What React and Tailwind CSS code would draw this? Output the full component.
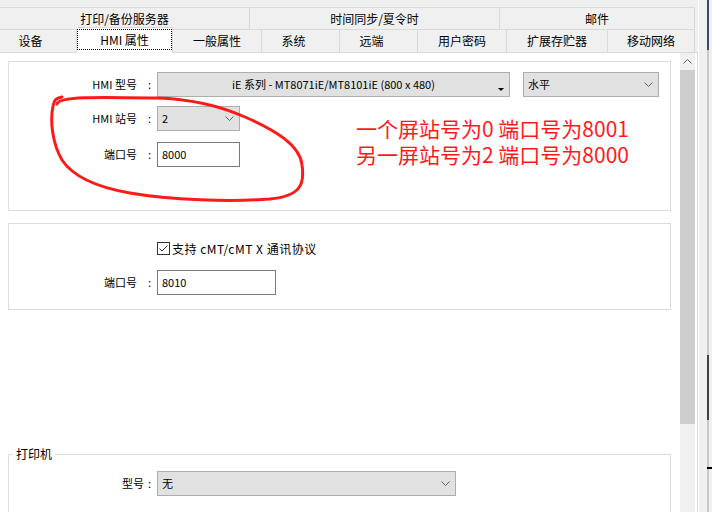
import React from 'react';

const Chevron = ({ up }) => (
  <svg width="9" height="5" viewBox="0 0 9 5">
    <path d={up ? 'M0.5 4.5 L4.5 0.5 L8.5 4.5' : 'M0.5 0.5 L4.5 4.5 L8.5 0.5'} stroke="#606060" fill="none" />
  </svg>
);

const Label = ({ text, colon = 'w-[16px]' }) => (
  <div className="w-[144px] shrink-0 flex justify-end items-center text-[11px]">
    <span>{text}</span>
    <span className={`${colon} text-right pr-[2px]`}>:</span>
  </div>
);

const Combo = ({ value, className, centered, tri }) => (
  <div className={`${className} h-[25px] bg-[#e1e1e1] border border-[#adadad] flex items-center relative text-[11px]`}>
    <span className={centered ? 'flex-1 text-center' : 'flex-1 pl-[4px]'}>{value}</span>
    {tri ? (
      <svg width="6" height="4" viewBox="0 0 6 4" className="absolute right-[5px] bottom-[4px]">
        <path d="M0 0 L6 0 L3 3 Z" fill="#000" />
      </svg>
    ) : (
      <span className="pr-[5px] flex items-center"><Chevron /></span>
    )}
  </div>
);

const Input = ({ value, className }) => (
  <div className={`${className} h-[25px] bg-white border border-[#7a7a7a] flex items-center pl-[4px] text-[11px]`}>{value}</div>
);

const row1 = [
  { t: '打印/备份服务器', w: 'w-[250px]' },
  { t: '时间同步/夏令时', w: 'w-[250px]' },
  { t: '邮件', w: 'w-[195px]' },
];

const row2 = [
  { t: '设备', w: 'w-[77px]', p: 'pr-[15px]' },
  { t: 'HMI 属性', w: 'w-[96px]', sel: true },
  { t: '一般属性', w: 'w-[89px]' },
  { t: '系统', w: 'w-[78px]', p: 'pr-[14px]' },
  { t: '远端', w: 'w-[78px]', p: 'pr-[14px]' },
  { t: '用户密码', w: 'w-[89px]' },
  { t: '扩展存贮器', w: 'w-[101px]' },
  { t: '移动网络', w: 'w-[87px]' },
];

export default function App() {
  return (
    <div className="w-[712px] h-[512px] overflow-hidden bg-[#f0f0f0] relative flex font-['Noto_Sans_CJK_SC',sans-serif] text-[12px] text-black">
      <div className="w-[698px] flex flex-col">
        {/* tab strip */}
        <div className="pt-[7px] w-[695px]">
          <div className="flex h-[22px] border-t border-[#d9d9d9]">
            {row1.map((c) => (
              <div key={c.t} className={`${c.w} border-r border-[#d9d9d9] flex items-center justify-center`}>{c.t}</div>
            ))}
          </div>
          <div className="flex h-[23px]">
            {row2.map((c) =>
              c.sel ? (
                <div key={c.t} className={`${c.w} relative z-10 -mt-[2px] h-[26px] bg-white border-t border-r border-[#d9d9d9]`}>
                  <div className="mt-[2px] h-[21px] border border-dotted border-black flex items-center justify-center -translate-y-[1px]">{c.t}</div>
                </div>
              ) : (
                <div key={c.t} className={`${c.w} border-t border-r border-[#d9d9d9] flex items-center justify-center ${c.p || ''}`}>{c.t}</div>
              )
            )}
          </div>
        </div>

        {/* content */}
        <div className="flex-1 bg-white border-t border-r border-[#d9d9d9] flex">
          <div className="flex-1 pl-[8px] pr-[9px] pt-[8px]">
            {/* HMI panel */}
            <div className="border border-[#dcdcdc] h-[150px] relative">
              <div className="mt-[10px] flex items-center gap-[4px]">
                <Label text="HMI 型号" />
                <Combo value="iE 系列 - MT8071iE/MT8101iE (800 x 480)" className="w-[353px]" centered tri />
                <Combo value="水平" className="w-[136px] ml-[9px]" />
              </div>
              <div className="mt-[9px] flex items-center gap-[4px]">
                <Label text="HMI 站号" />
                <Combo value="2" className="w-[83px]" />
              </div>
              <div className="mt-[11px] flex items-center gap-[4px]">
                <Label text="端口号" />
                <Input value="8000" className="w-[83px]" />
              </div>
              <div className="absolute left-[347px] top-[53px] text-[21px] leading-[26px] text-[#ff1a1a] whitespace-nowrap">
                <div>一个屏站号为0 端口号为8001</div>
                <div>另一屏站号为2 端口号为8000</div>
              </div>
            </div>

            {/* cMT panel */}
            <div className="mt-[12px] border border-[#dcdcdc] h-[87px]">
              <div className="mt-[18px] h-[13px] flex items-center pl-[148px] gap-[2px]">
                <svg width="13" height="13" viewBox="0 0 13 13">
                  <rect x="0.5" y="0.5" width="12" height="12" fill="#fff" stroke="#333" />
                  <path d="M2.5 6.5 L5 9 L10.5 3.5" stroke="#333" fill="none" />
                </svg>
                <span className="tracking-[0.5px]">支持 cMT/cMT X 通讯协议</span>
              </div>
              <div className="mt-[15px] flex items-center gap-[4px]">
                <Label text="端口号" />
                <Input value="8010" className="w-[119px]" />
              </div>
            </div>

            {/* printer */}
            <fieldset className="mt-[136px] border border-[#dcdcdc] h-[110px]">
              <legend className="ml-[4px] px-[3px] leading-[16px]">打印机</legend>
              <div className="mt-[9px] flex items-center gap-[4px]">
                <Label text="型号" colon="w-[9px]" />
                <Combo value="无" className="w-[299px] h-[24px]" />
              </div>
            </fieldset>
          </div>

          {/* scrollbar */}
          <div className="w-[15px] mr-[2px] bg-[#f0f0f0] flex flex-col">
            <div className="h-[17px] flex items-center justify-center"><Chevron up /></div>
            <div className="h-[354px] bg-[#cdcdcd]" />
          </div>
        </div>
      </div>

      {/* edge of window behind */}
      <div className="w-[14px] flex">
        <div className="w-[1px] bg-white" />
        <div className="w-[8px] bg-[#f0f0f0]" />
        <div className="w-[2px] flex flex-col">
          <div className="h-[50px] bg-[#3a4a60]" />
          <div className="h-[305px] bg-[#c8c8c8]" />
          <div className="h-[65px] bg-[#404040]" />
          <div className="h-[47px] bg-[#c8c8c8]" />
          <div className="h-[2px] bg-black" />
          <div className="flex-1 bg-[#c8c8c8]" />
        </div>
        <div className="w-[3px] flex flex-col bg-[#f0f0f0]">
          <div className="h-[467px]" />
          <div className="h-[2px] bg-black" />
        </div>
      </div>

      {/* red hand-drawn annotation */}
      <svg className="absolute left-0 top-0 pointer-events-none" width="712" height="512" viewBox="0 0 712 512">
        <path
          d="M57 104 C58 96 100 97 157 98 C190 99 220 106 245 117 C275 130 300 145 302 165 C305 185 300 196 270 199 C230 202 170 200 130 193 C95 187 72 175 62 160 C52 143 50 120 53 106 C54 100 56 98 62 97"
          stroke="#ff1a1a"
          strokeWidth="3"
          fill="none"
          strokeLinecap="round"
          strokeLinejoin="round"
        />
      </svg>
    </div>
  );
}
